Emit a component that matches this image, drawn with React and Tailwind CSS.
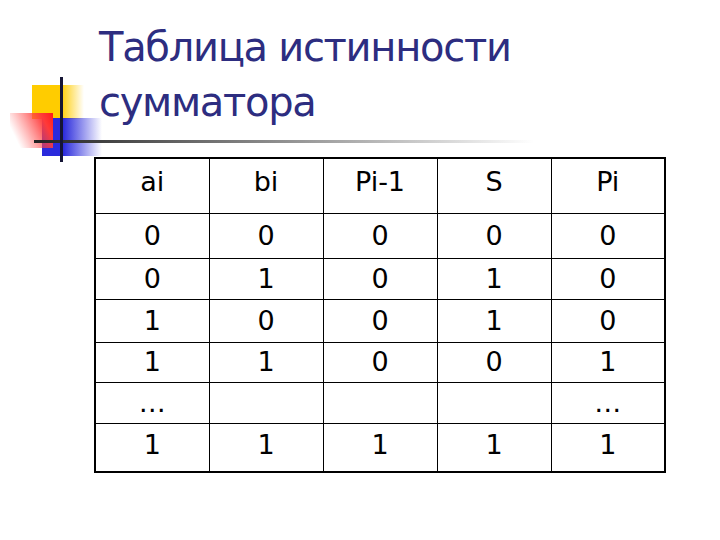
import React from "react";

const rows = [
  { h: "h-[55px]", pad: "pb-[8px]", cells: ["ai", "bi", "Pi-1", "S", "Pi"] },
  { h: "h-[45px]", pad: "", cells: ["0", "0", "0", "0", "0"] },
  { h: "h-[41px]", pad: "", cells: ["0", "1", "0", "1", "0"] },
  { h: "h-[43px]", pad: "", cells: ["1", "0", "0", "1", "0"] },
  { h: "h-[40px]", pad: "", cells: ["1", "1", "0", "0", "1"] },
  { h: "h-[41px]", pad: "", cells: ["…", "", "", "", "…"] },
  { h: "h-[49px]", pad: "pb-[4px]", cells: ["1", "1", "1", "1", "1"] },
];

function Logo() {
  return (
    <svg
      className="absolute left-0 top-0 pointer-events-none"
      width="540"
      height="170"
      viewBox="0 0 540 170"
    >
      <defs>
        <linearGradient id="yel" x1="0" y1="0" x2="1" y2="0">
          <stop offset="0" stopColor="#ffcc00" />
          <stop offset="0.55" stopColor="#ffcc00" />
          <stop offset="1" stopColor="#ffcc00" stopOpacity="0" />
        </linearGradient>
        <linearGradient id="red" x1="1" y1="0" x2="0" y2="0.4">
          <stop offset="0" stopColor="#ff1a1a" />
          <stop offset="0.25" stopColor="#ff3a3a" />
          <stop offset="1" stopColor="#ff5050" stopOpacity="0" />
        </linearGradient>
        <linearGradient id="blu" x1="0" y1="0" x2="1" y2="0">
          <stop offset="0" stopColor="#2a2adc" />
          <stop offset="0.35" stopColor="#2a2adc" />
          <stop offset="1" stopColor="#2a2adc" stopOpacity="0" />
        </linearGradient>
        <linearGradient id="ln" x1="0" y1="0" x2="1" y2="0">
          <stop offset="0" stopColor="#222222" />
          <stop offset="0.3" stopColor="#666666" />
          <stop offset="0.7" stopColor="#bbbbbb" />
          <stop offset="1" stopColor="#ffffff" />
        </linearGradient>
      </defs>
      <rect x="32" y="85" width="52" height="34" fill="url(#yel)" />
      <rect x="42" y="118" width="60" height="38" fill="url(#blu)" />
      <rect x="10" y="113" width="43" height="35" fill="url(#red)" />
      <rect x="34" y="140" width="500" height="3" fill="url(#ln)" />
      <rect x="60" y="77" width="3" height="85" fill="#151535" />
    </svg>
  );
}

export default function App() {
  return (
    <div className="relative w-[720px] h-[540px] bg-white overflow-hidden font-['DejaVu_Sans',sans-serif]">
      <Logo />
      <div className="relative flex flex-col">
        <h1 className="ml-[99px] mt-[20px] text-[40px] leading-[55px] tracking-[-1.3px] text-[#2d2d80] font-normal">
          Таблица истинности
          <br />
          сумматора
        </h1>
        <table className="ml-[94px] mt-[27px] w-[572px] table-fixed border-collapse border-2 border-black text-[27px] leading-[30px] text-black">
          <tbody>
            {rows.map((r, i) => (
              <tr key={i} className={r.h}>
                {r.cells.map((c, j) => (
                  <td key={j} className={`border border-black text-center align-middle p-0 ${r.pad}`}>
                    {c}
                  </td>
                ))}
              </tr>
            ))}
          </tbody>
        </table>
      </div>
    </div>
  );
}
